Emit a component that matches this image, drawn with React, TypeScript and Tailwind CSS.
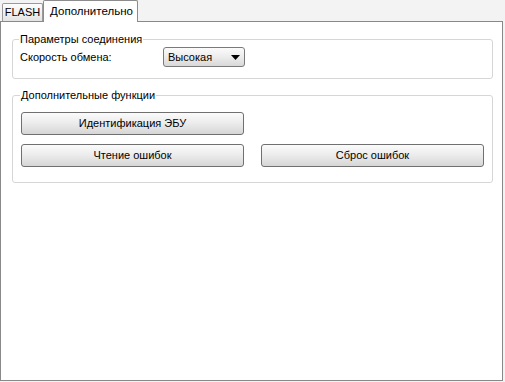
import React from 'react';

const font = { fontFamily: '"Liberation Sans", Arial, sans-serif' };

function XpButton({ children }: { children: React.ReactNode }) {
  return (
    <button className="h-[23px] w-[223px] rounded-[3px] border border-[#707070] bg-gradient-to-b from-[#fbfbfb] via-[#ebebeb] to-[#d6d6d6] text-[11px] text-black leading-none">
      {children}
    </button>
  );
}

export default function App() {
  return (
    <div className="w-[505px] h-[382px] bg-[#f3f3f3] text-[11px] text-black" style={font}>
      {/* Tabs */}
      <div className="flex items-end h-[21px] pl-[2px]">
        <div className="h-[18px] w-[41px] border border-[#9a9a9a] border-b-0 rounded-t-[2px] bg-gradient-to-b from-[#fdfdfd] to-[#e4e4e4] flex items-center justify-center">
          FLASH
        </div>
        <div className="relative z-10 -mb-px h-[22px] w-[95px] border border-[#8c8c8c] border-b-0 rounded-t-[2px] bg-white flex items-center justify-center pl-[2px] text-[11.5px]">
          Дополнительно
        </div>
      </div>

      {/* Pane */}
      <div className="w-[503px] h-[360px] border border-[#898989] bg-white pl-[11px] pr-[9px] pt-[10px]">
        <fieldset className="border border-[#d6d6d6] rounded-[3px] px-[7px] pb-[11px]">
          <legend className="px-[1px] -ml-[1px] leading-[14px]">Параметры соединения</legend>
          <div className="flex items-center h-[20px] mt-px">
            <span className="w-[143px]">Скорость обмена:</span>
            <div className="h-[20px] w-[82px] rounded-[3px] border border-[#7a7a7a] bg-gradient-to-b from-[#fbfbfb] via-[#ececec] to-[#d8d8d8] flex items-center justify-between pl-[4px] pr-[4px]">
              <span>Высокая</span>
              <svg width="9" height="5" viewBox="0 0 9 5">
                <path d="M0 0h9L4.5 5z" fill="#000" />
              </svg>
            </div>
          </div>
        </fieldset>

        <fieldset className="mt-[9px] border border-[#d6d6d6] rounded-[3px] px-[8px] pt-[10px] pb-[15px]">
          <legend className="px-[1px] -ml-[1px] leading-[14px]">Дополнительные функции</legend>
          <div className="flex flex-col gap-[9px]">
            <XpButton>Идентификация ЭБУ</XpButton>
            <div className="flex gap-[17px]">
              <XpButton>Чтение ошибок</XpButton>
              <XpButton>Сброс ошибок</XpButton>
            </div>
          </div>
        </fieldset>
      </div>
    </div>
  );
}
